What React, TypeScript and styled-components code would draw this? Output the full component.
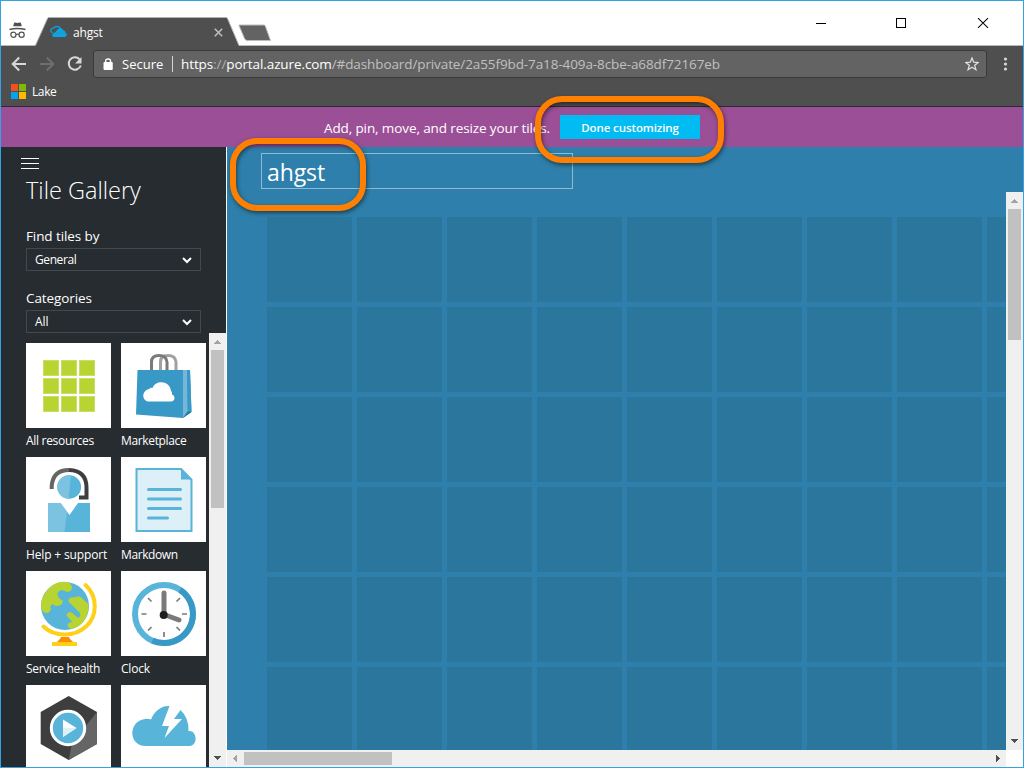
import React from "react";
import styled, { createGlobalStyle } from "styled-components";

const GlobalStyle = createGlobalStyle`
  * { box-sizing: border-box; }
  html, body { margin: 0; padding: 0; overflow: hidden; }
  body { font-family: "Open Sans", "Noto Sans", sans-serif; }
  svg { display: block; flex: none; }
`;

const Text = styled.span<{ $size: number; $track?: number; $color?: string; $weight?: number }>`
  font-size: ${(p) => p.$size}px;
  letter-spacing: ${(p) => p.$track ?? 0}px;
  color: ${(p) => p.$color ?? "#fff"};
  font-weight: ${(p) => p.$weight ?? 400};
  white-space: nowrap;
  line-height: 1;
`;

const BrowserWindow = styled.div`
  position: relative;
  width: 1024px;
  height: 768px;
  display: flex;
  flex-direction: column;
  border: 1px solid #35a2e8;
  background: #4f4f4f;
  overflow: hidden;
`;

const TitleBar = styled.div`
  height: 45px;
  flex: none;
  display: flex;
  align-items: flex-end;
  background: #fff;
  box-shadow: inset 0 -1px 0 #b9b9b9;
`;

const IncognitoSlot = styled.div`
  width: 33px;
  padding: 0 0 7px 8px;
`;

const Tab = styled.div`
  position: relative;
  width: 206px;
  height: 29px;
  display: flex;
  align-items: center;
  padding: 1px 17px 0 16px;
`;

const TabShape = styled.svg`
  position: absolute;
  left: 0;
  top: 0;
`;

const TabContent = styled.div`
  position: relative;
  flex: 1;
  display: flex;
  align-items: center;
  gap: 6px;
  > :last-child { margin-left: auto; }
`;

const TabTitle = styled.div`
  display: flex;
  padding-top: 1px;
`;

const NewTab = styled.div`
  padding: 0 0 4px 0;
  margin-left: -2px;
`;

const WindowButtons = styled.div`
  margin-left: auto;
  height: 45px;
  padding: 17px 34px 0 0;
  display: flex;
  gap: 70px;
`;

const NavBar = styled.div`
  height: 36px;
  flex: none;
  display: flex;
  align-items: center;
  padding: 0 14px 0 10px;
`;

const NavIcons = styled.div`
  display: flex;
  width: 82px;
  gap: 12px;
`;

const AddressBar = styled.div`
  width: 894px;
  height: 28px;
  display: flex;
  align-items: center;
  padding: 0 7px 0 9px;
  background: #636363;
  border: 1px solid #3a3a3a;
  border-radius: 3px;
  > :last-child { margin-left: auto; }
`;

const SecureLabel = styled.div`
  width: 59px;
  padding-left: 9px;
  display: flex;
  align-items: center;
`;

const Url = styled.div`
  display: flex;
  align-items: center;
  height: 16px;
  padding: 2px 0 0 8px;
  border-left: 1px solid #d5d5d5;
`;

const MenuSlot = styled.div`
  margin-left: auto;
`;

const Bookmarks = styled.div`
  height: 25px;
  flex: none;
  display: flex;
  align-items: center;
  gap: 6px;
  padding: 0 0 6px 10px;
  border-bottom: 1px solid #2b2b2b;
`;

const BookmarkName = styled.div`
  display: flex;
  padding-top: 2px;
`;

const Banner = styled.div`
  height: 40px;
  flex: none;
  display: flex;
  align-items: center;
  justify-content: center;
  gap: 10px;
  padding-top: 1px;
  background: #9b4f96;
`;

const BannerMessage = styled.div`
  display: flex;
  padding-top: 2px;
`;

const DoneButton = styled.button`
  width: 140px;
  height: 24px;
  border: 0;
  padding: 1px 0 0;
  margin-bottom: 1px;
  background: #00bcf2;
  display: flex;
  align-items: center;
  justify-content: center;
  font-family: inherit;
`;

const Portal = styled.div`
  flex: 1;
  min-height: 0;
  display: flex;
`;

const Gallery = styled.aside`
  width: 226px;
  display: flex;
  flex-direction: column;
  background: #272c30;
  border-right: 1px solid #fff;
`;

const GalleryHeader = styled.div`
  height: 186px;
  flex: none;
  padding: 11px 0 0 25px;
  display: flex;
  flex-direction: column;
`;

const Hamburger = styled.div`
  width: 18px;
  height: 11px;
  flex: none;
  margin-left: -5px;
  border: solid #fff;
  border-width: 1px 0;
  display: flex;
  align-items: center;
  &::before { content: ""; flex: 1; height: 1px; background: #fff; }
`;

const GalleryTitle = styled.div`
  height: 54px;
  flex: none;
  padding-top: 10px;
`;

const Field = styled.div`
  height: 62px;
  flex: none;
  padding-top: 8px;
  display: flex;
  flex-direction: column;
`;

const FieldLabel = styled.div`
  height: 11px;
  flex: none;
  margin-bottom: 6px;
  display: flex;
  align-items: center;
`;

const Select = styled.div`
  width: 175px;
  height: 23px;
  flex: none;
  border: 1px solid #42484d;
  display: flex;
  align-items: center;
  justify-content: space-between;
  padding: 0 8px;
`;

const GalleryBody = styled.div`
  flex: 1;
  min-height: 0;
  display: flex;
  justify-content: space-between;
`;

const TileGrid = styled.div`
  display: grid;
  grid-template-columns: 85px 85px;
  grid-auto-rows: 114px;
  column-gap: 10px;
  padding: 10px 0 0 25px;
  overflow: hidden;
`;

const Tile = styled.div`
  display: flex;
  flex-direction: column;
`;

const TileArt = styled.div`
  width: 85px;
  height: 85px;
  flex: none;
  background: #fff;
`;

const TileName = styled.div`
  height: 26px;
  display: flex;
  align-items: center;
`;

const ScrollTrack = styled.div<{ $horizontal?: boolean }>`
  flex: none;
  display: flex;
  justify-content: space-between;
  background: #f0f0f0;
  ${(p) => (p.$horizontal ? "height: 17px; flex-direction: row;" : "width: 17px; flex-direction: column;")}
`;

const ScrollEnd = styled.div`
  width: 17px;
  height: 17px;
  display: flex;
  align-items: center;
  justify-content: center;
`;

const ScrollRun = styled.div<{ $horizontal?: boolean }>`
  flex: 1;
  display: flex;
  padding: ${(p) => (p.$horizontal ? "2px 0" : "0 2px")};
`;

const Thumb = styled.div<{ $length: number; $horizontal?: boolean }>`
  background: #c1c1c1;
  width: ${(p) => (p.$horizontal ? p.$length : 13)}px;
  height: ${(p) => (p.$horizontal ? 13 : p.$length)}px;
`;

const Dashboard = styled.main`
  flex: 1;
  min-width: 0;
  display: flex;
  flex-direction: column;
  background: #2e7fab;
`;

const DashboardHeader = styled.div`
  height: 45px;
  flex: none;
  padding: 6px 0 0 34px;
`;

const TitleInput = styled.div`
  width: 312px;
  height: 36px;
  border: 1px solid #8fbad2;
  padding: 2px 0 0 5px;
  display: flex;
  align-items: center;
`;

const CanvasRow = styled.div`
  flex: 1;
  min-height: 0;
  display: flex;
`;

const Canvas = styled.div`
  flex: 1;
  min-width: 0;
  overflow: hidden;
  padding: 25px 0 0 40px;
  display: grid;
  grid-template-columns: repeat(9, 85px);
  grid-auto-rows: 85px;
  gap: 5px;
`;

const Cell = styled.div`
  background: #2b769d;
`;

const BottomRow = styled.div`
  height: 17px;
  flex: none;
  display: flex;
  background: #fff;
  > :first-child { flex: 1; }
`;

const Corner = styled.div`
  width: 17px;
`;

const Callout = styled.div<{ $x: number; $y: number; $w: number; $h: number }>`
  position: absolute;
  left: ${(p) => p.$x}px;
  top: ${(p) => p.$y}px;
  width: ${(p) => p.$w}px;
  height: ${(p) => p.$h}px;
  border: 6px solid #ff8000;
  border-radius: 27px;
  filter: drop-shadow(1px 2px 2px rgba(0, 0, 0, 0.5));
`;

type Dir = "up" | "down" | "left" | "right";
const arrowPaths: Record<Dir, string> = {
  up: "M8 7h1v1h1v1h1v1h1v1H5v-1h1V9h1V8h1z",
  down: "M5 6h7v1h-1v1h-1v1H9v1H8V9H7V8H6V7H5z",
  left: "M10 5v7H9v-1H8v-1H7V9H6V8h1V7h1V6h1V5z",
  right: "M7 5v7h1v-1h1v-1h1V9h1V8h-1V7H9V6H8V5z",
};

const ScrollArrow = ({ dir, dim }: { dir: Dir; dim?: boolean }) => (
  <ScrollEnd>
    <svg width="17" height="17" shapeRendering="crispEdges">
      <path d={arrowPaths[dir]} fill={dim ? "#a3a3a3" : "#505050"} />
    </svg>
  </ScrollEnd>
);

const Scrollbar = ({ thumb, horizontal }: { thumb: number; horizontal?: boolean }) => (
  <ScrollTrack $horizontal={horizontal}>
    <ScrollArrow dir={horizontal ? "left" : "up"} dim />
    <ScrollRun $horizontal={horizontal}>
      <Thumb $length={thumb} $horizontal={horizontal} />
    </ScrollRun>
    <ScrollArrow dir={horizontal ? "right" : "down"} />
  </ScrollTrack>
);

const Incognito = () => (
  <svg width="17" height="17" viewBox="0 0 17 17" fill="none" stroke="#505050">
    <path d="M5 1.2q.3-1 1.2-.6l2.3.5 2.3-.5q.9-.4 1.2.6l.8 3H4.200z" fill="#505050" stroke="none" />
    <path d="M.5 7.4Q8.500 5.800 16.500 7.400" strokeWidth="1.500" />
    <circle cx="4.400" cy="12.800" r="2.600" strokeWidth="1.200" />
    <circle cx="12.600" cy="12.800" r="2.600" strokeWidth="1.200" />
    <path d="M7 12.500q1.500-.8 3 0" strokeWidth="1.200" />
  </svg>
);

const AzureCloud = () => (
  <svg width="17" height="12" viewBox="0 0 17 12">
    <path d="M2.600 6.800C-.4 5.300.6 2.200 3.500 2.200 4.500.4 8.500-.6 10.300 2.300L13 5" fill="none" stroke="#0aa5e2" strokeWidth="1.300" />
    <path d="M4.500 11C1.500 10.800 1.600 6.800 4.700 6.700L7.500 3.500q3.700-2.700 6 .9c1.700.1 1.900 1 1.800 2 2.200.9 2 4.600-.8 4.600z" fill="#0aa5e2" />
    <path d="M5.500 7.200h4.800L12.500 6" fill="none" stroke="#3b86a5" strokeWidth=".7" />
  </svg>
);

const Chevron = () => (
  <svg width="10" height="8" viewBox="0 0 10 8">
    <path d="M1 2l4 4 4-4" fill="none" stroke="#fff" strokeWidth="2" />
  </svg>
);

const Art = ({ children }: { children: React.ReactNode }) => (
  <svg width="85" height="85" viewBox="0 0 85 85">{children}</svg>
);

const AllResourcesArt = () => (
  <Art>
    {[17.5, 35.5, 53.5].map((y) =>
      [17.5, 35.5, 53.5].map((x) => (
        <rect key={`${x}-${y}`} x={x} y={y} width="15" height="15" fill="#b8d432" stroke="#c9de66" />
      ))
    )}
  </Art>
);

const MarketplaceArt = () => (
  <Art>
    <path d="M39.500 28V19q0-6.500 7.500-6.500t8 6.500v9" fill="none" stroke="#a0a1a2" strokeWidth="3" />
    <path d="M30.500 28V19q0-6.500 7.500-6.500t8 6.500v9" fill="none" stroke="#7a7a7a" strokeWidth="3" />
    <path d="M16.500 27H69l1.500 42-8.500 6-47-3.500z" fill="#3999c6" />
    <path d="M62 27h4l1 41-5 7z" fill="#76b7d9" />
    <path d="M66 27h3l1.500 42-4-2z" fill="#3999c6" />
    <path d="M62 75l4.800-7 3.700 1z" fill="#267ba6" />
    <path d="M28 58.500c-7 0-8-10.500 0-12.500 2.500-2 3-1 3.500-1 3-8.500 17.500-8 18.500 3 1.500 1.500 1 2.500 1 3.500 3.500 1 3.500 7-1 7z" fill="#fff" />
  </Art>
);

const HelpArt = () => (
  <Art>
    <path d="M25.700 32V29Q27 13 43 13" fill="none" stroke="#656565" strokeWidth="4" />
    <path d="M43 13Q60 13.500 60.500 30v10.500h-7.500" fill="none" stroke="#3e3e3e" strokeWidth="4" />
    <circle cx="43.300" cy="30" r="11.800" fill="#59b4d9" />
    <path d="M45 18.400A11.800 11.800 0 1 0 42.500 41.800z" fill="#7bc3e0" />
    <path d="M22 46h12.500l9 12L52 46h12v29H22z" fill="#59b4d9" />
    <path d="M22 46h12.500l6.500 9-2.500 20H22z" fill="#7bc3e0" />
  </Art>
);

const MarkdownArt = () => (
  <Art>
    <path d="M15.500 12H60l10.500 11v51h-55z" fill="#ddeff7" stroke="#59b4d9" strokeWidth="2" />
    <path d="M60 11l11.500 11.500H60z" fill="#59b4d9" />
    <path d="M27.500 32.500h32M27.500 42h32M27.500 51.500h32M27.500 61H46.500" stroke="#59b4d9" strokeWidth="3" strokeLinecap="round" />
  </Art>
);

const HealthArt = () => (
  <Art>
    <path d="M59.500 14C72 25.500 71.500 45 60 55.500S29 66.500 17.500 55.500" fill="none" stroke="#ffd01a" strokeWidth="4" strokeLinecap="round" />
    <circle cx="39" cy="35" r="24" fill="#59b4d9" />
    <path d="M43.500 11.500Q30 8 20.500 20C14 28 15 35 15.500 38c2 5.500 8.500 5 9.500 0-2-4 2-6 3.500-3.500 5 1.500 9-1.500 8-5-3.500-2-5-4-5-7 2-5 6-3 9.500-1.500 6-.5 6-5 2.500-9.500z" fill="#b8d432" />
    <path d="M62.500 33L54.500 26q-2-1.500-3.500 0l-6 .5q-3 1-2.500 4L54 42q1 3-1 4.500L45 41q-4 0-4.500 3.500l6 6.500q-5 0-5 4l3 3Q60 55 62.500 38z" fill="#b8d432" />
    <path d="M43.500 33L53 42.500q1 3-1 4.500L46 41.500q-2-1-4-.5L36 36z" fill="#59b4d9" />
    <path d="M35 66h8l1 2 4 4H30l4-4z" fill="#ff8c00" />
    <path d="M26 71h25v4H26z" fill="#fcd116" />
  </Art>
);

const ClockArt = () => (
  <Art>
    <circle cx="43" cy="43" r="29" fill="none" stroke="#59b4d9" strokeWidth="6" />
    <path d="M59 18.800A29 29 0 0 1 31.500 69.600" fill="none" stroke="#3999c6" strokeWidth="6" />
    <path d="M43 61v5M20.500 43h5M61 43h5M27 27l3.500 3.500M59 27l-3.500 3.500M27 59.500l3.500-3.500M59 59.500L55.500 56" stroke="#7a7a7a" strokeWidth="1.700" />
    <path d="M43 22v21.500L58 49" fill="none" stroke="#7a7a7a" strokeWidth="5" strokeLinecap="round" strokeLinejoin="round" />
    <circle cx="42.700" cy="44" r="4" fill="#1e1e1e" />
  </Art>
);

const MediaArt = () => (
  <Art>
    <path d="M42.700 11L71 27v32L42.700 75 14.700 59V27z" fill="#3e3e3e" />
    <path d="M71 27v32L42.700 75 46 58z" fill="#656565" />
    <circle cx="42" cy="43" r="16.700" fill="#59b4d9" stroke="#fff" strokeWidth="3" />
    <path d="M37 34.500L50.500 43 37 52z" fill="#fff" />
    <path d="M37 43h13.500L37 52z" fill="#ddeff7" />
  </Art>
);

const CloudBoltArt = () => (
  <Art>
    <path d="M25 61C7 61 7 36 24 34q3-.5 6 .5C34 25 41 20.500 48.500 21L41 41h7L43.500 53 61 34h-8l6.500-9q8.500 8 8 21c8-1.500 10.500 14 1 15z" fill="#59b4d9" />
  </Art>
);

const tiles: { name: string; art: React.ReactNode; track: number }[] = [
  { name: "All resources", art: <AllResourcesArt />, track: -0.3 },
  { name: "Marketplace", art: <MarketplaceArt />, track: -0.35 },
  { name: "Help + support", art: <HelpArt />, track: -0.15 },
  { name: "Markdown", art: <MarkdownArt />, track: -0.4 },
  { name: "Service health", art: <HealthArt />, track: -0.3 },
  { name: "Clock", art: <ClockArt />, track: -0.2 },
  { name: "", art: <MediaArt />, track: 0 },
  { name: "", art: <CloudBoltArt />, track: 0 },
];

export default function App() {
  return (
    <>
      <GlobalStyle />
      <BrowserWindow>
        <TitleBar>
          <IncognitoSlot><Incognito /></IncognitoSlot>
          <Tab>
            <TabShape width="206" height="29">
              <path d="M0 29L1.500 28 13.500 1.500Q14 .5 15 .5H192Q193 .5 193.500 1.500L205 29z" fill="#4f4f4f" />
              <path d="M0 28.500H1.500L13.500 1.500Q14 .5 15 .5H192Q193 .5 193.500 1.500L205 28.500" fill="none" stroke="#b0b0b0" />
            </TabShape>
            <TabContent>
              <AzureCloud />
              <TabTitle><Text $size={12} $track={-0.2}>ahgst</Text></TabTitle>
              <svg width="9" height="9"><path d="M.8.8l7.400 7.400M8.200.8L.8 8.200" stroke="#bdbdbd" strokeWidth="1.600" /></svg>
            </TabContent>
          </Tab>
          <NewTab>
            <svg width="35" height="18">
              <path d="M1 1.500L6.500 14.500Q7.500 16.500 9 16.500H32.500L27.500 2.500Q27 1 26 1H1z" fill="#636363" stroke="#bdbdbd" />
            </svg>
          </NewTab>
          <WindowButtons>
            <svg width="10" height="10" shapeRendering="crispEdges"><path d="M0 5h10v1H0z" /></svg>
            <svg width="10" height="10" shapeRendering="crispEdges"><rect x=".5" y=".5" width="9" height="9" fill="none" stroke="#000" /></svg>
            <svg width="13" height="10"><path d="M2 .2l10 9.600M12 .2L2 9.800" stroke="#000" strokeWidth="1.100" /></svg>
          </WindowButtons>
        </TitleBar>

        <NavBar>
          <NavIcons>
            <svg width="16" height="16"><path d="M15 8H2M8.200 1.500L1.700 8l6.500 6.500" fill="none" stroke="#d8d8d8" strokeWidth="2" /></svg>
            <svg width="16" height="16"><path d="M1 8h13M7.800 1.500L14.300 8l-6.500 6.500" fill="none" stroke="#6f6f6f" strokeWidth="2" /></svg>
            <svg width="16" height="16"><path d="M12.500 3.200A6.200 6.200 0 1 0 13.800 9.500" fill="none" stroke="#d8d8d8" strokeWidth="2" /><path d="M14.500 1v6.500H8z" fill="#d8d8d8" /></svg>
          </NavIcons>
          <AddressBar>
            <svg width="10" height="12"><path d="M1 4.500h8.200v7H1z" fill="#fff" stroke="#fff" strokeLinejoin="round" /><path d="M2.700 5V3q0-2 2.400-2t2.400 2v2" fill="none" stroke="#fff" strokeWidth="1.400" /></svg>
            <SecureLabel><Text $size={13} $track={0}>Secure</Text></SecureLabel>
            <Url>
              <Text $size={13.5} $track={-0.1}>https</Text>
              <Text $size={13.5} $track={-0.1} $color="#b0b0b0">://</Text>
              <Text $size={13.5} $track={-0.1}>portal.azure.com</Text>
              <Text $size={13.5} $track={-0.1} $color="#c0c0c0">/#dashboard/private/2a55f9bd-7a18-409a-8cbe-a68df72167eb</Text>
            </Url>
            <svg width="14" height="14" viewBox="0 0 14 14"><path d="M7 1l1.700 4.200 4.500.3-3.500 2.800 1.200 4.400L7 10.300l-3.900 2.400 1.200-4.400L.8 5.500l4.500-.3z" fill="none" stroke="#dedede" strokeWidth="1.300" /></svg>
          </AddressBar>
          <MenuSlot>
            <svg width="7" height="14" fill="#d8d8d8"><circle cx="3.500" cy="2" r="1.600" /><circle cx="3.500" cy="7" r="1.600" /><circle cx="3.500" cy="12" r="1.600" /></svg>
          </MenuSlot>
        </NavBar>
        <Bookmarks>
          <svg width="15" height="15">
            <path d="M0 0h7v7H0z" fill="#f25022" /><path d="M8 0h7v7H8z" fill="#7fba00" />
            <path d="M0 8h7v7H0z" fill="#00a4ef" /><path d="M8 8h7v7H8z" fill="#ffb900" />
          </svg>
          <BookmarkName><Text $size={12} $track={-0.4}>Lake</Text></BookmarkName>
        </Bookmarks>

        <Banner>
          <BannerMessage><Text $size={13.5} $track={-0.11}>Add, pin, move, and resize your tiles.</Text></BannerMessage>
          <DoneButton><Text $size={11.5} $weight={600} $track={-0.1}>Done customizing</Text></DoneButton>
        </Banner>

        <Portal>
          <Gallery>
            <GalleryHeader>
              <Hamburger />
              <GalleryTitle><Text $size={23.5} $track={0} $weight={300}>Tile Gallery</Text></GalleryTitle>
              <Field>
                <FieldLabel><Text $size={13.5} $track={-0.1}>Find tiles by</Text></FieldLabel>
                <Select><Text $size={12} $track={-0.4}>General</Text><Chevron /></Select>
              </Field>
              <Field>
                <FieldLabel><Text $size={13.5} $track={-0.1}>Categories</Text></FieldLabel>
                <Select><Text $size={12} $track={-0.1}>All</Text><Chevron /></Select>
              </Field>
            </GalleryHeader>
            <GalleryBody>
              <TileGrid>
                {tiles.map((t, i) => (
                  <Tile key={i}>
                    <TileArt>{t.art}</TileArt>
                    <TileName><Text $size={12} $track={t.track}>{t.name}</Text></TileName>
                  </Tile>
                ))}
              </TileGrid>
              <Scrollbar thumb={158} />
            </GalleryBody>
          </Gallery>

          <Dashboard>
            <DashboardHeader>
              <TitleInput><Text $size={23} $track={-0.1}>ahgst</Text></TitleInput>
            </DashboardHeader>
            <CanvasRow>
              <Canvas>
                {Array.from({ length: 54 }, (_, i) => <Cell key={i} />)}
              </Canvas>
              <Scrollbar thumb={131} />
            </CanvasRow>
            <BottomRow>
              <Scrollbar thumb={148} horizontal />
              <Corner />
            </BottomRow>
          </Dashboard>
        </Portal>

        <Callout $x={229} $y={136.5} $w={135.5} $h={73} />
        <Callout $x={534} $y={94.5} $w={189} $h={67} />
      </BrowserWindow>
    </>
  );
}
